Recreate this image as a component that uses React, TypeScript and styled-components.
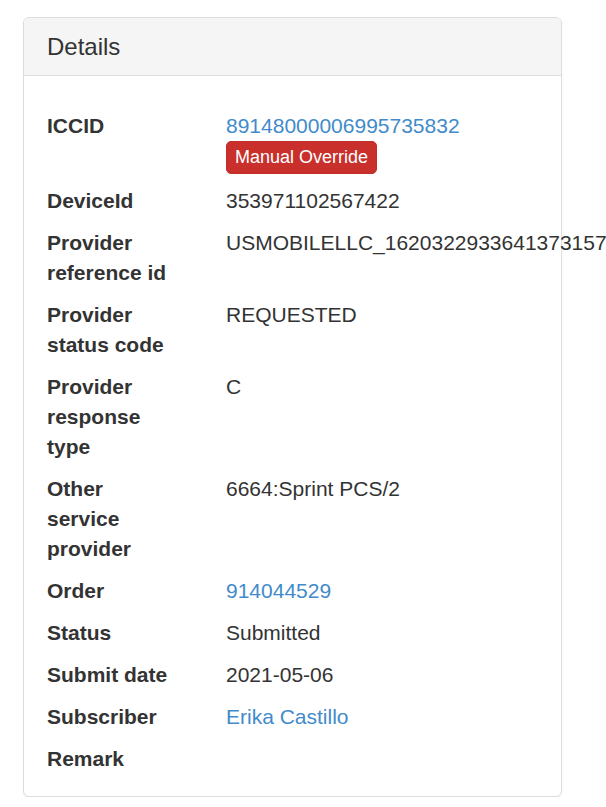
import React from "react";
import styled, { createGlobalStyle } from "styled-components";

const GlobalStyle = createGlobalStyle`
  body {
    margin: 0;
    background: #fff;
    font-family: "Liberation Sans", Arial, Helvetica, sans-serif;
    color: #333;
  }
`;

const Page = styled.div`
  padding: 17px 0 0 23px;
`;

const Panel = styled.div`
  width: 539px;
  box-sizing: border-box;
  border: 1px solid #ddd;
  border-radius: 6px;
  background: #fff;
  box-shadow: 0 1px 2px rgba(0, 0, 0, 0.05);
`;

const PanelHeading = styled.div`
  background: #f5f5f5;
  border-bottom: 1px solid #ddd;
  border-radius: 5px 5px 0 0;
  padding: 15px 23px;
`;

const PanelTitle = styled.h3`
  margin: 0;
  font-size: 24px;
  line-height: 27px;
  font-weight: 400;
  color: #333;
`;

const PanelBody = styled.div`
  padding: 35px 23px 22px;
  display: flex;
  flex-direction: column;
  gap: 12px;
`;

const Row = styled.div`
  display: grid;
  grid-template-columns: 125px auto;
  column-gap: 54px;
  font-size: 21px;
  line-height: 30px;
`;

const Label = styled.div`
  font-weight: 700;
`;

const Value = styled.div`
  display: flex;
  flex-direction: column;
  align-items: flex-start;
  white-space: nowrap;
`;

const Link = styled.a`
  color: #428bca;
  text-decoration: none;
  cursor: pointer;
`;

const DangerButton = styled.button`
  font-family: inherit;
  font-size: 18px;
  line-height: 29px;
  padding: 1px 8px;
  color: #fff;
  background: #c9302c;
  border: 1px solid #c12e2a;
  border-radius: 5px;
  cursor: pointer;
`;

type Item = { label: string; value?: string; link?: boolean; badge?: string };

const items: Item[] = [
  { label: "ICCID", value: "89148000006995735832", link: true, badge: "Manual Override" },
  { label: "DeviceId", value: "353971102567422" },
  { label: "Provider reference id", value: "USMOBILELLC_1620322933641373157" },
  { label: "Provider status code", value: "REQUESTED" },
  { label: "Provider response type", value: "C" },
  { label: "Other service provider", value: "6664:Sprint PCS/2" },
  { label: "Order", value: "914044529", link: true },
  { label: "Status", value: "Submitted" },
  { label: "Submit date", value: "2021-05-06" },
  { label: "Subscriber", value: "Erika Castillo", link: true },
  { label: "Remark" },
];

export default function App() {
  return (
    <Page>
      <GlobalStyle />
      <Panel>
        <PanelHeading>
          <PanelTitle>Details</PanelTitle>
        </PanelHeading>
        <PanelBody>
          {items.map((it) => (
            <Row key={it.label}>
              <Label>{it.label}</Label>
              <Value>
                {it.value && (it.link ? <Link>{it.value}</Link> : <span>{it.value}</span>)}
                {it.badge && <DangerButton>{it.badge}</DangerButton>}
              </Value>
            </Row>
          ))}
        </PanelBody>
      </Panel>
    </Page>
  );
}
